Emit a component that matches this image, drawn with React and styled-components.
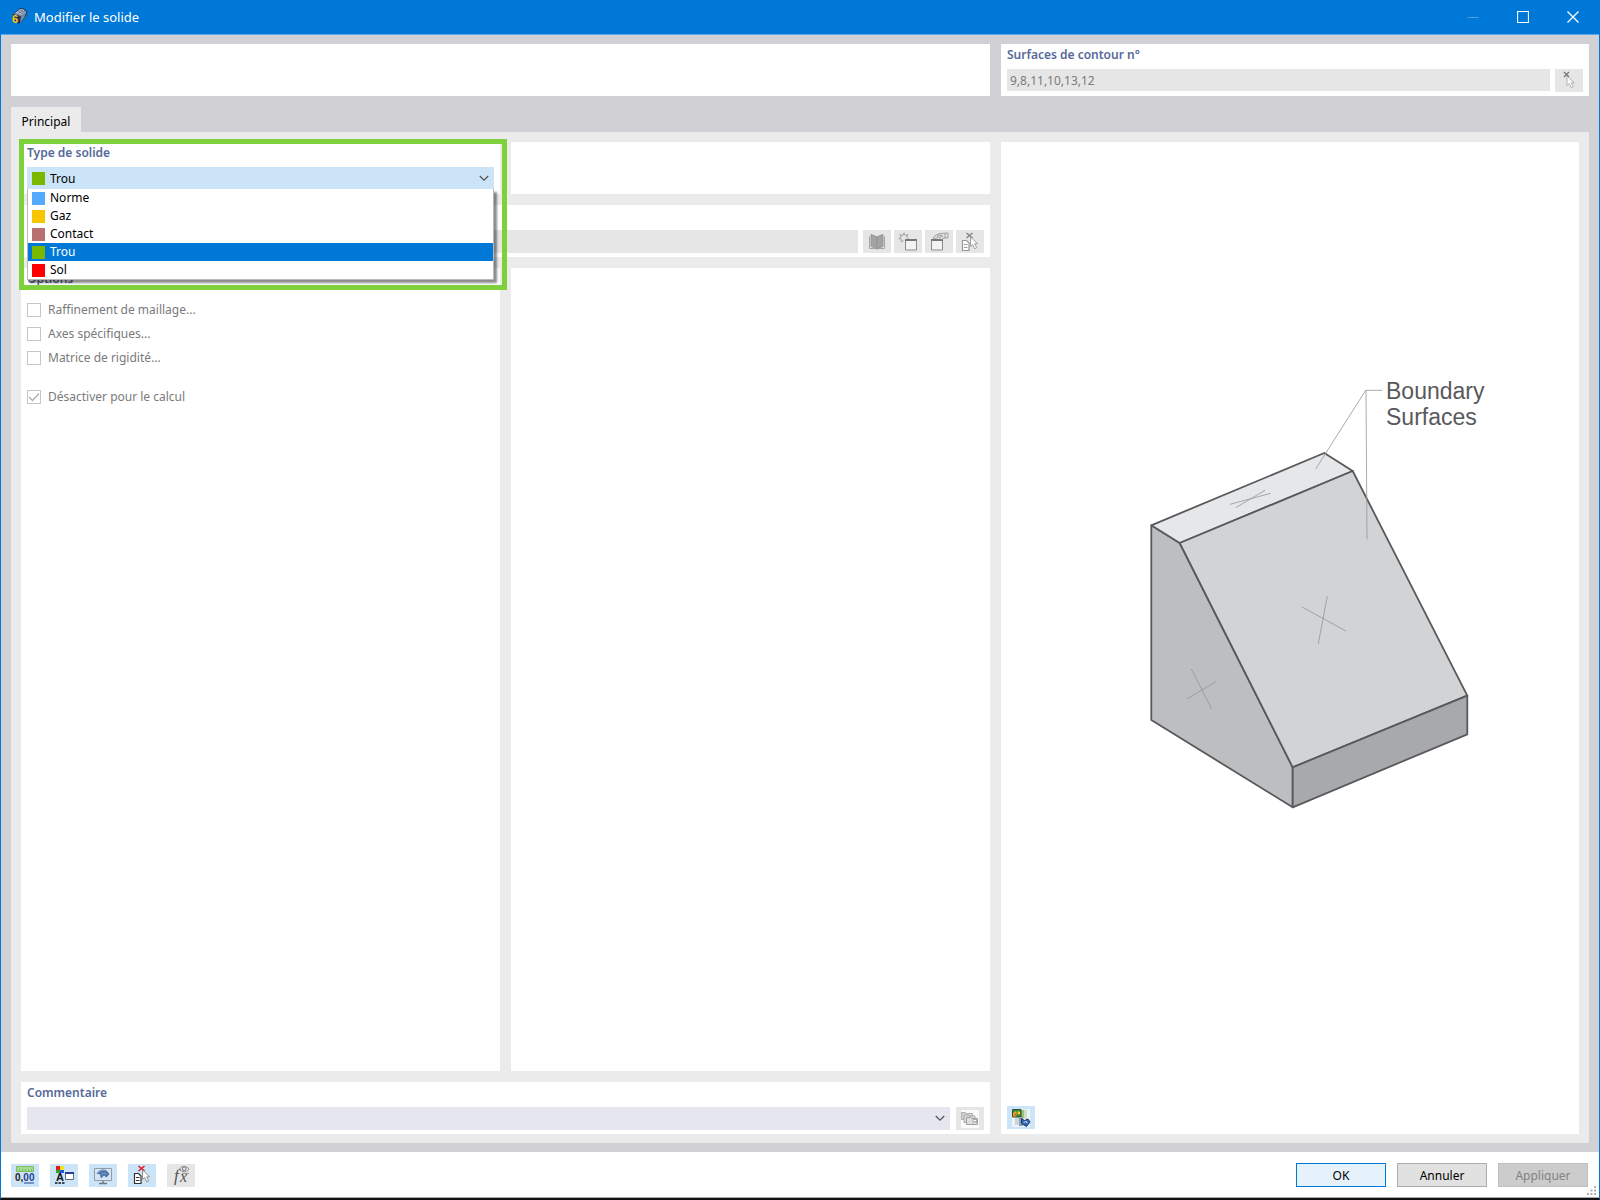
import React, { useState } from "react";
import styled, { createGlobalStyle, css } from "styled-components";

const GlobalStyle = createGlobalStyle`
  *, *::before, *::after { box-sizing: border-box; }
  body {
    margin: 0;
    background: #111;
    font-family: "Noto Sans", "Open Sans", sans-serif;
    font-size: 12px;
    line-height: 18px;
    color: #000;
  }
  button, input, select { font: inherit; color: inherit; }
`;

const Window = styled.div`
  display: flex;
  flex-direction: column;
  min-height: 100vh;
  border: solid #0078d7;
  border-width: 0 1px;
  border-bottom: 2px solid #111;
  background: #d1d0d5;
`;

const TitleBar = styled.header`
  display: flex;
  align-items: center;
  height: 35px;
  padding: 0 1px 0 9px;
  gap: 6px;
  background: #0078d7;
  border-bottom: 1px solid #5fa8e3;
  color: #fff;
`;

const WindowTitle = styled.h1`
  flex: 1;
  margin: 0;
  font-size: 13px;
  font-weight: 400;
`;

const WindowControls = styled.div`
  display: flex;
  height: 100%;
`;

const WindowButton = styled.button`
  display: grid;
  place-items: center;
  width: 50px;
  padding: 0;
  border: 0;
  background: none;
  color: #fff;
  opacity: ${(p) => (p.disabled ? 0.3 : 1)};
`;

const Body = styled.main`
  flex: 1;
  display: flex;
  flex-direction: column;
  padding: 9px 10px;
`;

const TopRow = styled.div`
  display: grid;
  grid-template-columns: 979fr 588fr;
  gap: 11px;
`;

const Panel = styled.section`
  position: relative;
  min-height: 52px;
  padding: 0 6px 4px;
  background: #fff;
  ${(p) => p.$wide && css`grid-column: 1 / -1;`}
`;

const PanelTitle = styled.h2`
  margin: 0 0 3px;
  font-size: 12px;
  font-weight: 600;
  line-height: 22px;
  color: #57699a;
`;

const TitleLabel = styled.label`
  display: block;
`;

const FieldRow = styled.div`
  display: flex;
  gap: ${(p) => p.$gap || 5}px;
`;

const TextField = styled.input`
  flex: 1;
  min-width: 0;
  height: 22px;
  padding: 0 3px;
  border: 0;
  border-radius: 0;
  background: #e6e6e6;
  color: #7a7a7a;
`;

const EmptyField = styled(TextField)`
  height: 23px;
`;

const ButtonGroup = styled.div`
  display: flex;
  gap: ${(p) => p.$gap}px;
`;

const IconButton = styled.button`
  display: grid;
  place-items: center;
  width: 28px;
  height: 23px;
  padding: 0;
  border: 0;
  background: ${(p) => (p.$active ? "#cce4f7" : "#e6e6e6")};
`;

const Tabs = styled.div`
  display: flex;
  margin-top: 11px;
`;

const Tab = styled.button`
  width: 70px;
  height: 25px;
  padding: 5px 0 0;
  border: 0;
  background: #ebebeb;
`;

const TabPane = styled.div`
  flex: 1;
  display: grid;
  grid-template-columns: 969fr 578fr;
  gap: 11px;
  padding: 10px 10px 9px;
  background: #ebebeb;
`;

const Form = styled.div`
  display: grid;
  grid-template-columns: 1fr 1fr;
  grid-template-rows: auto auto 1fr auto;
  gap: 11px;
`;

const SelectBox = styled.div`
  position: relative;
  flex: 1;
`;

const Chevron = styled.svg`
  position: absolute;
  right: 5px;
  top: 8px;
  pointer-events: none;
`;

const Select = styled.select`
  display: block;
  width: 100%;
  height: ${(p) => p.$height}px;
  padding: 2px 23px 0;
  border: 0;
  border-radius: 0;
  appearance: none;
  background: ${(p) => p.$tone};
`;

const Swatch = styled.span`
  width: 13px;
  height: 13px;
  background: ${(p) => p.$color};
`;

const SelectedSwatch = styled(Swatch)`
  position: absolute;
  left: 5px;
  top: 5px;
  pointer-events: none;
`;

const OptionList = styled.ul`
  position: absolute;
  z-index: 2;
  top: 100%;
  left: 0;
  right: 0;
  margin: 0;
  padding: 0;
  list-style: none;
  background: #fff;
  border: 1px solid #b9b9b9;
  border-top: 0;
  box-shadow: 3px 3px 2px rgba(0, 0, 0, 0.45);
`;

const OptionItem = styled.li`
  display: flex;
  align-items: center;
  gap: 5px;
  height: 18px;
  padding-left: 4px;
  background: ${(p) => (p.$selected ? "#0078d7" : "#fff")};
  color: ${(p) => (p.$selected ? "#fff" : "inherit")};
`;

const Highlight = styled.div`
  position: absolute;
  z-index: 3;
  top: -3px;
  left: -2px;
  right: -7px;
  height: 151px;
  border: 5px solid #7fd13b;
  pointer-events: none;
`;

const CheckRow = styled.label`
  display: flex;
  align-items: center;
  gap: 7px;
  height: 24px;
  margin-top: ${(p) => (p.$apart ? 15 : 0)}px;
  color: #7a7a7a;
`;

const OptionsBody = styled.div`
  padding-top: 5px;
`;

const Check = styled.input`
  width: 14px;
  height: 14px;
  margin: 0;
  appearance: none;
  border: 1px solid #c6c6c6;
  background: #fff;
  &:checked {
    background: #fff url("data:image/svg+xml,%3Csvg xmlns='http://www.w3.org/2000/svg' width='12' height='12' fill='none' stroke='%23b0b0b0' stroke-width='1.4'%3E%3Cpath d='M1 6l3.500 3.500L11 2.500'/%3E%3C/svg%3E") center no-repeat;
  }
`;

const Preview = styled.section`
  display: flex;
  flex-direction: column;
  padding: 0 6px 5px;
  background: #fff;
`;

const Stage = styled.div`
  flex: 1;
  display: grid;
  place-items: center;
`;

const Footer = styled.footer`
  position: relative;
  display: flex;
  align-items: center;
  justify-content: space-between;
  height: 46px;
  padding: 1px 11px 0 10px;
  background: #fff;
  border-bottom: 1px solid #aaa;
`;

const DialogButton = styled.button`
  width: 90px;
  height: 24px;
  padding: 2px 0 0;
  border: 1px solid #adadad;
  background: #e1e1e1;
  ${(p) => p.$primary && css`
    border-color: #0078d7;
    background: #e5f1fb;
  `}
  &:disabled {
    border-color: #bfbfbf;
    background: #ccc;
    color: #838383;
  }
`;

const Grip = styled.svg`
  position: absolute;
  right: 2px;
  bottom: 1px;
`;

const Ico = ({ children, w = 20, h = 20 }) => (
  <svg width={w} height={h} viewBox={`0 0 ${w} ${h}`} fill="none" aria-hidden="true">{children}</svg>
);

const Down = () => (
  <Chevron width="10" height="7" viewBox="0 0 10 7" fill="none" stroke="#555" strokeWidth="1.3" aria-hidden="true">
    <path d="M.8 1l4.200 4.200L9.200 1" />
  </Chevron>
);

const AppIcon = () => (
  <Ico w={18} h={20}>
    <path d="M3 7l7-6 4 .5 3.500 3.500L15 11l-6 6-6-5z" fill="#26364f" />
    <path d="M4 7l6-5 3.500.5 3 3L11 9z" fill="#b9c6d8" />
    <path d="M5 6l6 3M7.500 4l6 3M9 2.500l6 3M6.500 8L13 3M9 9l6-5" stroke="#5d6f8c" strokeWidth=".8" />
    <path d="M11 9.500l5-4-1.500 5L10 16z" fill="#7488a6" />
    <text x="2" y="16" fontFamily="Liberation Sans, sans-serif" fontSize="11" fontWeight="700" fill="#ffc91a">6</text>
  </Ico>
);

const Arrow = ({ x = 0, y = 0, stroke = "#999" }) => (
  <path transform={`translate(${x} ${y})`} d="M0 0v9.500l2.200-2 2 4.300 2-1-2-4h3z" fill="#fff" stroke={stroke} strokeWidth=".9" />
);

const PickIcon = () => (
  <Ico>
    <path d="M5 1l5 5M10 1L5 6" stroke="#777" strokeWidth="1.400" />
    <Arrow x={8} y={5} stroke="#aaa" />
  </Ico>
);

const PickDocIcon = ({ cross = "#888", line = "#999", pointer = "#999" }) => (
  <Ico>
    <path d="M6.500 1l6 5M12.500 1l-6 5" stroke={cross} strokeWidth="1.600" />
    <path d="M2.500 8.500h4l2.500 2.500v7.500h-6.500z" fill="#fff" stroke={line} strokeWidth="1.200" />
    <path d="M4 12.500h3.500M4 15.500h3.500" stroke={line} />
    <Arrow x={10.5} y={5} stroke={pointer} />
  </Ico>
);

const BookIcon = () => (
  <Ico>
    <path d="M2.500 4.500v12h6.500l1 .8 1-.8h6.500v-12" stroke="#a5a5a5" />
    <path d="M4 2.500l5.500 2v12L4 14.500zM16 2.500l-5.500 2v12l5.500-2z" fill="#a3a3a3" stroke="#8f8f8f" strokeWidth=".8" />
  </Ico>
);

const NewIcon = () => (
  <Ico>
    <path d="M6 .8l1 2.600 3-.8-1.500 2.600L11 7M6 .8L5 3.400 1.800 2.600 3.400 5 .8 6.500l2.900.8L3 10l2.500-1.500" stroke="#9a9a9a" strokeWidth=".9" />
    <path d="M7.500 7.500h11v10.500h-11z" fill="#f3f3f3" stroke="#8c8c8c" />
    <path d="M7 8h12" stroke="#777" strokeWidth="2" />
  </Ico>
);

const EditIcon = () => (
  <Ico>
    <path d="M2.500 7.500h11v10.500h-11z" fill="#f3f3f3" stroke="#8c8c8c" />
    <path d="M2 8h12" stroke="#777" strokeWidth="2" />
    <path d="M4 6l3-3 4-1.500 8-.5v5l-4 0-3 1.500-2-2.500-4 1.500z" fill="#e0e0e0" stroke="#9a9a9a" strokeWidth=".9" />
    <path d="M8 4l5-1M11 5l3-1M16 1.500V6" stroke="#999" strokeWidth=".9" />
  </Ico>
);

const CopiesIcon = () => (
  <Ico>
    <path fill="#fafafa" d="M1 1h18v18H1z" />
    <path d="M1.500 3.500h4l1 1h6v6h-11z" fill="#d2d2d2" stroke="#b0b0b0" />
    <path d="M4 6h4l1 1h6v6.500H4z" fill="#d8d8d8" stroke="#aaa" />
    <path d="M6.500 8.500h4l1 1h6v6h-11z" fill="#dedede" stroke="#a0a0a0" />
    <path d="M13 10.500v3.500l2-2 1.500 2v-3.500z" fill="#fff" stroke="#999" strokeWidth=".8" />
  </Ico>
);

const PictureIcon = () => (
  <Ico>
    <path d="M1 1h18v18H1z" fill="#eef3f6" />
    <path d="M10 2h3v8h-3z" fill="#9cbf7c" />
    <path d="M13 2h3v9h-3z" fill="#cfe0c2" />
    <path d="M4 10h4v7H4z" fill="#ccd3da" />
    <path d="M8 10h4v8H8z" fill="#93a1ae" />
    <path d="M1.500 1.500h8.500v7.500H1.500z" fill="#2f8f3a" stroke="#3a4a3c" />
    <path d="M2 5l2.500-2 2 3-2 2.500H2z" fill="#f0a51f" />
    <path d="M6.500 3l2.500 1v2l-2 .5z" fill="#f4dc2f" />
    <path d="M3.500 5.500h2v2h-2z" fill="#e3482d" />
    <path d="M10.500 10.500l3 2 3.500-1.500 2 3-3.500 4.500-5-3z" fill="#2f62b3" stroke="#183a74" />
    <path d="M12.500 14.500l2.500-1 1.500 1.500" stroke="#a9cbf5" strokeWidth="1.200" />
  </Ico>
);

const UnitsIcon = () => (
  <Ico>
    <path d="M1.500 1.500h17v5h-17z" fill="#a5dc92" stroke="#79bd67" />
    <path d="M4.500 4v3M7.500 4v3M10.500 4v3M13.500 4v3M16.500 4v3" stroke="#79bd67" />
    <text x="0" y="16" fontFamily="Liberation Sans, sans-serif" fontSize="10" fontWeight="700" fill="#222">0,<tspan fill="#24408e">00</tspan></text>
    <path d="M9 18h10" stroke="#24408e" />
  </Ico>
);

const DisplayIcon = () => (
  <Ico>
    <path d="M2 1h4v4H2z" fill="#e01919" />
    <path d="M6 1h4v4H6z" fill="#f6e423" />
    <path d="M2 5h4v3H2z" fill="#26a33a" />
    <path d="M6 5h4v3H6z" fill="#2d54d8" />
    <text x="2" y="16" fontFamily="Liberation Sans, sans-serif" fontSize="11" fontWeight="700" fill="#111">A</text>
    <path d="M1 18h10" stroke="#111" strokeWidth="1.500" strokeDasharray="2.500 1" />
    <path d="M11.500 7.500h8v7h-8z" fill="#fff" stroke="#667" />
    <path d="M11 8h9" stroke="#2a3f94" strokeWidth="2" />
  </Ico>
);

const ScreenIcon = () => (
  <Ico>
    <path d="M1.500 3.500h17v12h-17z" fill="#d3e6f5" stroke="#929ca6" />
    <path d="M10 16v2.500M6 18.500h8" stroke="#6e7882" strokeWidth="1.400" />
    <path d="M3.500 8.500C6 5 10 3.500 13 5l3.500 4-3 3.500-2.500-2-3 3-1-4z" fill="#4c72a6" />
    <path d="M5 8c3-3 6-3 8-1.500M8 9.500c2-1.500 4-1.500 5.500 0" stroke="#86a5cc" />
  </Ico>
);

const FormulaIcon = () => (
  <Ico>
    <text x="3" y="16" fontFamily="Liberation Serif, serif" fontStyle="italic" fontSize="17" fill="#555">f</text>
    <text x="9" y="17" fontFamily="Liberation Serif, serif" fontStyle="italic" fontSize="16" fill="#555">x</text>
    <path d="M8.500 4c2.500-3.500 7-3.500 9.500 0-2.500 3.500-7 3.500-9.500 0zM11 8.300h7" stroke="#888" strokeWidth=".9" />
    <circle cx="13.200" cy="3.800" r="1.800" stroke="#777" />
  </Ico>
);

const SolidDrawing = () => (
  <svg width="400" height="508" viewBox="-40 10 400 508" fill="none" role="img" aria-label="Boundary Surfaces">
    <g stroke="#58595b" strokeWidth="1.800" strokeLinejoin="round">
      <path d="M21.300 165.300L49.700 183 162.700 407.300v40L21.300 360z" fill="#bdbec0" />
      <path d="M21.300 165.300L194.300 93l28.400 18L49.700 183z" fill="#e6e7e9" />
      <path d="M49.700 183l173-72L337.300 335.700l-174.600 71.600z" fill="#d2d3d5" />
      <path d="M162.700 407.300l174.600-71.600v38.600l-174.600 73z" fill="#a8a9ad" />
    </g>
    <g stroke="#939598" strokeWidth=".8">
      <path d="M100 144.300l40.700-11M105.700 147.700l29.300-17.400" />
      <path d="M172 247l44 24M197.300 236l-9 47.700" />
      <path d="M61.300 309l20.400 40M57 339l29.300-17.700" />
      <path d="M252.300 30.300h-16.600l-50 78.700M236 30.300l1 149" />
    </g>
    <g fontFamily="Liberation Sans, Arial, sans-serif" fontSize="23" fill="#58595b">
      <text x="256" y="39">Boundary</text>
      <text x="256" y="65">Surfaces</text>
    </g>
  </svg>
);

const TYPES = [
  { name: "Norme", color: "#55aaff" },
  { name: "Gaz", color: "#f7c600" },
  { name: "Contact", color: "#b97070" },
  { name: "Trou", color: "#7ab800" },
  { name: "Sol", color: "#ff0000" },
];

export default function App() {
  const [type, setType] = useState("Trou");
  const current = TYPES.find((t) => t.name === type);

  return (
    <>
      <GlobalStyle />
      <Window>
        <TitleBar>
          <AppIcon />
          <WindowTitle>Modifier le solide</WindowTitle>
          <WindowControls>
            <WindowButton aria-label="Réduire" disabled>
              <Ico w={12} h={12}><path d="M.5 6.500h11" stroke="#fff" /></Ico>
            </WindowButton>
            <WindowButton aria-label="Agrandir">
              <Ico w={12} h={12}><path d="M.5.500h11v11H.5z" stroke="#fff" strokeWidth="1.200" /></Ico>
            </WindowButton>
            <WindowButton aria-label="Fermer">
              <Ico w={12} h={12}><path d="M.5.500l11 11M11.500.500l-11 11" stroke="#fff" strokeWidth="1.300" /></Ico>
            </WindowButton>
          </WindowControls>
        </TitleBar>

        <Body>
          <TopRow>
            <Panel />
            <Panel>
              <PanelTitle><TitleLabel htmlFor="surfaces">Surfaces de contour n°</TitleLabel></PanelTitle>
              <FieldRow>
                <TextField id="surfaces" defaultValue="9,8,11,10,13,12" disabled />
                <IconButton aria-label="Sélectionner" disabled><PickIcon /></IconButton>
              </FieldRow>
            </Panel>
          </TopRow>

          <Tabs role="tablist">
            <Tab role="tab" aria-selected="true">Principal</Tab>
          </Tabs>

          <TabPane role="tabpanel">
            <Form>
              <Panel>
                <PanelTitle><TitleLabel htmlFor="type">Type de solide</TitleLabel></PanelTitle>
                <SelectBox>
                  <Select id="type" $height={22} $tone="#cce4f7" value={type} onChange={(e) => setType(e.target.value)}>
                    {TYPES.map((t) => <option key={t.name}>{t.name}</option>)}
                  </Select>
                  <SelectedSwatch $color={current.color} />
                  <Down />
                  <OptionList role="listbox" aria-label="Type de solide">
                    {TYPES.map((t) => (
                      <OptionItem key={t.name} role="option" aria-selected={t.name === type} $selected={t.name === type} onClick={() => setType(t.name)}>
                        <Swatch $color={t.color} />
                        {t.name}
                      </OptionItem>
                    ))}
                  </OptionList>
                </SelectBox>
                <Highlight />
              </Panel>
              <Panel />
              <Panel $wide>
                <PanelTitle>&nbsp;</PanelTitle>
                <FieldRow>
                  <EmptyField aria-label="Matériau" disabled />
                  <ButtonGroup $gap={3}>
                    <IconButton aria-label="Bibliothèque" disabled><BookIcon /></IconButton>
                    <IconButton aria-label="Nouveau" disabled><NewIcon /></IconButton>
                    <IconButton aria-label="Modifier" disabled><EditIcon /></IconButton>
                    <IconButton aria-label="Sélectionner" disabled><PickDocIcon /></IconButton>
                  </ButtonGroup>
                </FieldRow>
              </Panel>
              <Panel>
                <PanelTitle>Options</PanelTitle>
                <OptionsBody>
                  <CheckRow><Check type="checkbox" disabled />Raffinement de maillage...</CheckRow>
                  <CheckRow><Check type="checkbox" disabled />Axes spécifiques...</CheckRow>
                  <CheckRow><Check type="checkbox" disabled />Matrice de rigidité...</CheckRow>
                  <CheckRow $apart><Check type="checkbox" checked readOnly disabled />Désactiver pour le calcul</CheckRow>
                </OptionsBody>
              </Panel>
              <Panel />
              <Panel $wide>
                <PanelTitle><TitleLabel htmlFor="comment">Commentaire</TitleLabel></PanelTitle>
                <FieldRow $gap={6}>
                  <SelectBox>
                    <Select id="comment" $height={23} $tone="#e6e6f0"><option></option></Select>
                    <Down />
                  </SelectBox>
                  <IconButton aria-label="Commentaires"><CopiesIcon /></IconButton>
                </FieldRow>
              </Panel>
            </Form>

            <Preview>
              <Stage><SolidDrawing /></Stage>
              <IconButton $active aria-label="Image"><PictureIcon /></IconButton>
            </Preview>
          </TabPane>
        </Body>

        <Footer>
          <ButtonGroup $gap={11}>
            <IconButton $active aria-label="Unités"><UnitsIcon /></IconButton>
            <IconButton $active aria-label="Affichage"><DisplayIcon /></IconButton>
            <IconButton $active aria-label="Vue"><ScreenIcon /></IconButton>
            <IconButton $active aria-label="Désélectionner"><PickDocIcon cross="#e01b24" line="#333" pointer="#888" /></IconButton>
            <IconButton aria-label="Formule"><FormulaIcon /></IconButton>
          </ButtonGroup>
          <ButtonGroup $gap={11}>
            <DialogButton $primary>OK</DialogButton>
            <DialogButton>Annuler</DialogButton>
            <DialogButton disabled>Appliquer</DialogButton>
          </ButtonGroup>
          <Grip width="10" height="10" viewBox="0 0 10 10" fill="#b0b0b0" aria-hidden="true">
            <path d="M7 0h2v2H7zM7 3.500h2v2H7zM3.500 3.500h2v2h-2zM7 7h2v2H7zM3.500 7h2v2h-2zM0 7h2v2H0z" />
          </Grip>
        </Footer>
      </Window>
    </>
  );
}
